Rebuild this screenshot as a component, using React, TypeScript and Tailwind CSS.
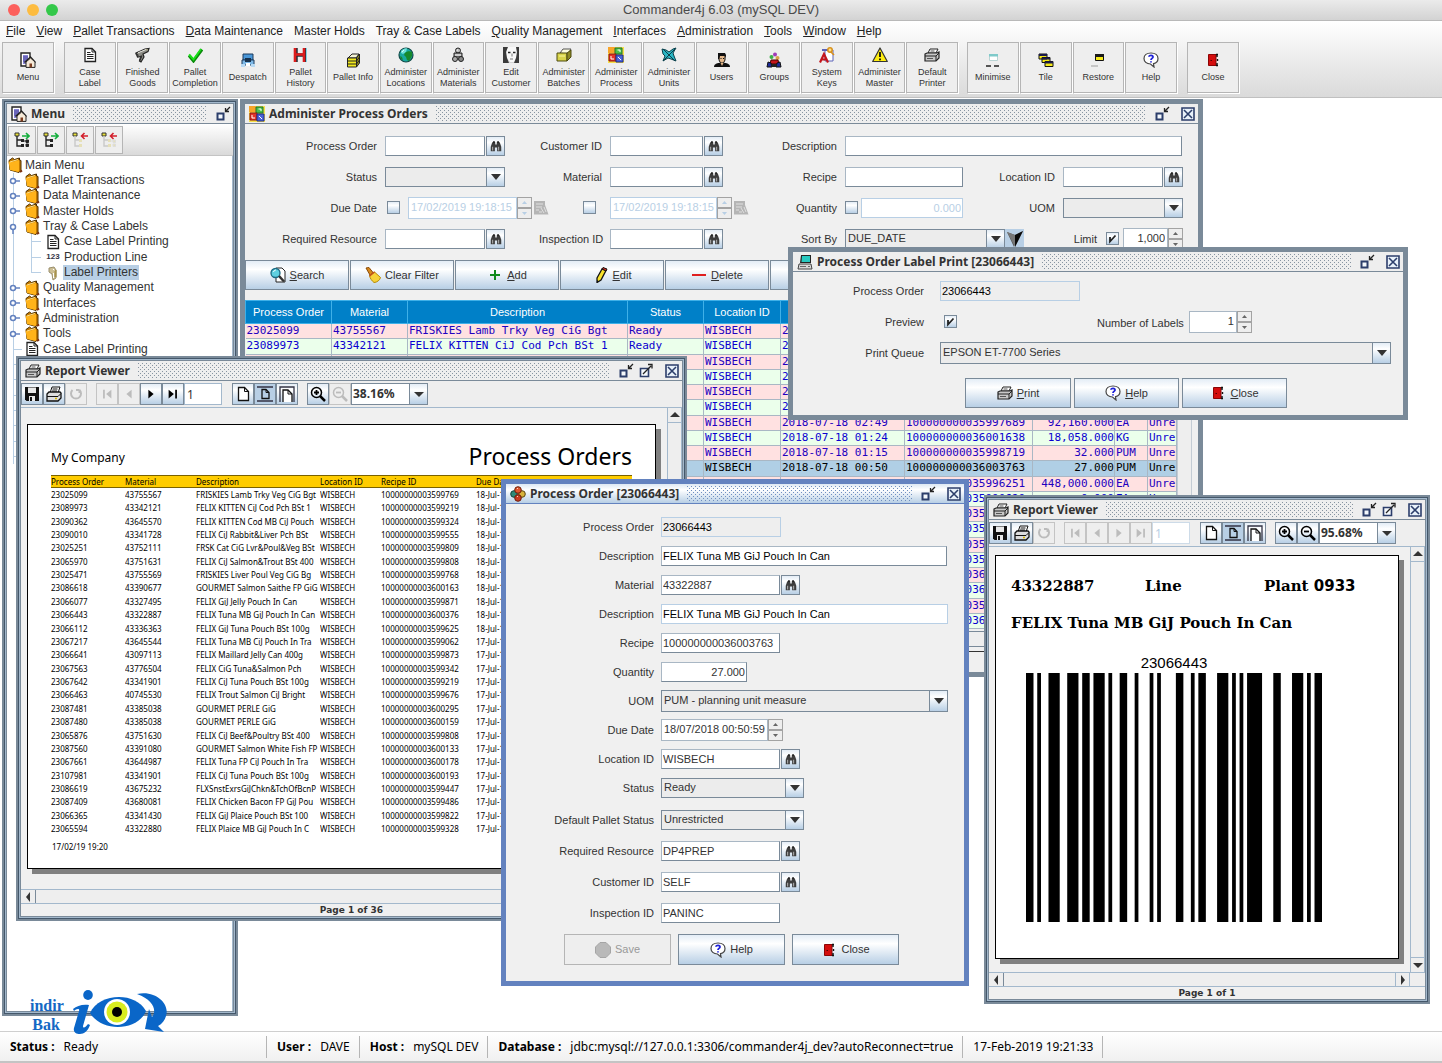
import type { ReactNode } from "react"
import clsx from "clsx"

/* ---------- data ---------- */

type Order = {
  id: string
  material: string
  description: string
  recipe: string
  due: string
  qty: string
  uom: string
}

const o = (
  id: string,
  material: string,
  description: string,
  recipe: string,
  due: string,
  qty = "0.000",
  uom = "EA"
): Order => ({ id, material, description, recipe, due, qty, uom })

const orders: Order[] = [
  o("23025099", "43755567", "FRISKIES Lamb Trky Veg CiG Bgt", "100000000035997690", "2018-07-18 05:30"),
  o("23089973", "43342121", "FELIX KITTEN CiJ Cod Pch BSt 1", "100000000035992190", "2018-07-18 05:12"),
  o("23090362", "43645570", "FELIX KITTEN Cod MB CiJ Pouch", "100000000035993240", "2018-07-18 04:50"),
  o("23090010", "43341728", "FELIX CiJ Rabbit&Liver Pch BSt", "100000000035995550", "2018-07-18 04:22"),
  o("23025251", "43752111", "FRSK Cat CiG Lvr&Poul&Veg BSt", "100000000035998090", "2018-07-18 03:41"),
  o("23065970", "43751631", "FELIX CiJ Salmon&Trout BSt 400", "100000000035998080", "2018-07-18 03:10"),
  o("23025471", "43755569", "FRISKIES Liver Poul Veg CiG Bg", "100000000035997689", "2018-07-18 02:49", "92,160.000"),
  o("23086618", "43390677", "GOURMET Salmon Saithe FP GiG", "100000000036001638", "2018-07-18 01:24", "18,058.000", "KG"),
  o("23066077", "43327495", "FELIX GiJ Jelly Pouch In Can", "100000000035998719", "2018-07-18 01:15", "32.000", "PUM"),
  o("23066443", "43322887", "FELIX Tuna MB GiJ Pouch In Can", "100000000036003763", "2018-07-18 00:50", "27.000", "PUM"),
  o("23066112", "43336363", "FELIX GiJ Tuna Pouch BSt 100g", "100000000035996251", "2018-07-18 00:20", "448,000.000"),
  o("23067217", "43645544", "FELIX Tuna MB CiJ Pouch In Tra", "100000000035990620", "2018-07-17 23:50"),
  o("23066641", "43097113", "FELIX Maillard Jelly Can 400g", "100000000035998730", "2018-07-17 23:31"),
  o("23067563", "43776504", "FELIX CiG Tuna&Salmon Pch", "100000000035993420", "2018-07-17 23:02"),
  o("23067642", "43341901", "FELIX CiJ Tuna Pouch BSt 100g", "100000000035992190", "2018-07-17 22:40"),
  o("23066463", "40745530", "FELIX Trout Salmon CiJ Bright", "100000000035996760", "2018-07-17 22:11"),
  o("23087481", "43385038", "GOURMET PERLE GiG", "100000000036002950", "2018-07-17 21:45"),
  o("23087480", "43385038", "GOURMET PERLE GiG", "100000000036001590", "2018-07-17 21:20"),
  o("23065876", "43751630", "FELIX CiJ Beef&Poultry BSt 400", "100000000035998080", "2018-07-17 20:50"),
  o("23087560", "43391080", "GOURMET Salmon White Fish FP", "100000000036001330", "2018-07-17 20:15"),
  o("23067661", "43644987", "FELIX Tuna FP CiJ Pouch In Tra", "100000000036001780", "2018-07-17 19:55"),
  o("23107981", "43341901", "FELIX CiJ Tuna Pouch BSt 100g", "100000000036001930", "2018-07-17 19:30"),
  o("23086619", "43675232", "FLXSnstExrsGiJChkn&TchOfBcnP", "100000000035994470", "2018-07-17 19:05"),
  o("23087409", "43680081", "FELIX Chicken Bacon FP GiJ Pou", "100000000035994860", "2018-07-17 18:40"),
  o("23066365", "43341430", "FELIX GiJ Plaice Pouch BSt 100", "100000000035998220", "2018-07-17 18:12"),
  o("23065594", "43322880", "FELIX Plaice MB GiJ Pouch In C", "100000000035993280", "2018-07-17 17:50"),
]

const selectedId = "23066443"

// start and width of each bar, in modules
const bars = [
  [0, 2], [3, 1], [6, 3], [11, 3], [15, 2], [18, 3], [22, 1], [25, 2], [29, 1], [33, 1], [35, 1],
  [40, 2], [44, 1], [46, 2], [51, 3], [55, 1], [57, 1], [59, 4], [66, 2], [71, 3], [75, 1], [77, 2],
]

/* ---------- icons ---------- */

function Svg({ size = 16, children, className }: { size?: number; children: ReactNode; className?: string }) {
  return (
    <svg width={size} height={size} viewBox="0 0 16 16" fill="none" className={clsx("shrink-0", className)} aria-hidden="true">
      {children}
    </svg>
  )
}

const MenuIcon = () => (
  <Svg>
    <path d="M1 1h9v13H1z" fill="#fff" stroke="#222" strokeWidth="1.4" />
    <path d="M3 3h5v9H3z" fill="#8a86d8" />
    <path d="M3 5h5M3 7h5M3 9h5" stroke="#4a469c" />
    <path d="M4.500 10.500 10.500 5l5 5.500" fill="#e8c9a8" stroke="#222" strokeWidth="1.3" />
    <path d="M6 10v5.400h9V10l-4.400-4z" fill="#f6ead8" stroke="#222" />
    <path d="M9.500 11.500h2.500v4H9.500z" fill="#7a3b1e" />
  </Svg>
)
const DocIcon = () => (
  <Svg>
    <path d="M3 1.500h7l3.500 3.500v9.500H3z" fill="#fff" stroke="#222" strokeWidth="1.3" />
    <path d="M10 1.500V5h3.500M5 5.500h3.500M5 7.500h6.500M5 9.500h6.500M5 11.500h6.500" stroke="#222" />
  </Svg>
)
const ScannerIcon = () => (
  <Svg>
    <path d="M2 6l9-4 4-.5-1 3-5 2.500 1 3-3 5-1.500-1 2-4.500-4 .5z" fill="#8d8d86" stroke="#222" strokeWidth="1.200" />
    <path d="M4 5.800l8-3.300" stroke="#e6e6e0" />
    <path d="M1.500 6.500l3 2M7.500 8.500l-2 5" stroke="#333" strokeWidth="1.400" />
    <path d="M11.500 2.500l2-.3v1.600z" fill="#d8cf9a" />
  </Svg>
)
const CheckIcon = () => (
  <Svg>
    <path d="M2 8.500 6.500 14 15 2.500" stroke="#0b8a0b" strokeWidth="3" />
    <path d="M2 7.500 6.500 12.500 14 2" stroke="#19e019" strokeWidth="2" />
  </Svg>
)
const TruckIcon = () => (
  <Svg>
    <path d="M3 2h10v6H3z" fill="#4a97d8" stroke="#1d3b5c" />
    <path d="M2 8h12v5H2z" fill="#7db9e8" stroke="#1d3b5c" />
    <path d="M5 6h6v4H5z" fill="#17324e" />
    <path d="M1 12h4v3H1zM11 12h4v3h-4z" fill="#b8daf4" />
    <path d="M6 11h4v3H6z" fill="#fff" />
  </Svg>
)
const HistoryIcon = () => (
  <Svg>
    <path d="M4 1v14M13 1v14M4 8h9" stroke="#24303a" strokeWidth="3.500" />
    <path d="M3 1v14M12 1v14M3 7.500h9" stroke="#dd1c1c" strokeWidth="2.600" />
    <path d="M14.500 1v14" stroke="#7fd6e6" />
  </Svg>
)
const PalletIcon = () => (
  <Svg>
    <path d="M3 6l4-4h7l-3 4z" fill="#f3f3d5" stroke="#222" />
    <path d="M2.500 6h9v9h-9z" fill="#f2ea1c" stroke="#222" />
    <path d="M11.500 6l3-4v9l-3 4z" fill="#9a9320" stroke="#222" />
    <path d="M2.500 9h9M2.500 12h9l3-4M11.500 9l3-4" stroke="#222" />
  </Svg>
)
const GlobeIcon = () => (
  <Svg>
    <circle cx="8" cy="8" r="7" fill="#19a9a0" stroke="#124a48" strokeWidth="1.200" />
    <path d="M3 4c2-2 4-3 6-2.500L8 5l-3 2-2-1z" fill="#6fe0d8" />
    <path d="M7 6c2-2 5-2 7-1v4l-3 5-2-1-1-3-2-2z" fill="#178a2c" />
    <path d="M2 9l2 1 1 3-2-1z" fill="#178a2c" />
    <path d="M4 5l2-2" stroke="#d7fff7" />
  </Svg>
)
const MaterialsIcon = () => (
  <Svg>
    <circle cx="8" cy="3.500" r="2.500" fill="#bbb" stroke="#222" />
    <path d="M4 6h8v4H4z" fill="#999" stroke="#222" />
    <circle cx="5" cy="12" r="2.500" fill="#aaa" stroke="#222" />
    <circle cx="11" cy="12" r="2.500" fill="#888" stroke="#222" />
    <path d="M5 8h6M7 3h1" stroke="#fff" />
  </Svg>
)
const FaceIcon = () => (
  <Svg>
    <path d="M0 0h16v16H0z" fill="#d4d4d4" />
    <path d="M4 0h9l1 9-3 6H7L3 10z" fill="#f8f8f8" />
    <path d="M0 0h5L3 5l1 6 2 5H0zM16 0h-3l1 5-1 6-2 5h5v-5z" fill="#3a3a3a" />
    <path d="M5 5.500h2.500M10 5.500h2.500" stroke="#222" strokeWidth="1.400" />
    <path d="M7 12h3M9 6.500v3" stroke="#777" />
  </Svg>
)
const BatchIcon = () => (
  <Svg>
    <path d="M4 6l3-4h8l-3 5z" fill="#fdfde0" stroke="#555" />
    <path d="M1 6h10v8H1z" fill="#d8d44a" stroke="#4c4a10" />
    <path d="M11 6l4-3v7l-4 4z" fill="#8d8a25" stroke="#4c4a10" />
    <path d="M3 9h6" stroke="#f7f59c" />
  </Svg>
)
const ProcessIcon = () => (
  <Svg>
    <path d="M0 0h16v16H0z" fill="#f6e04a" />
    <path d="M0 0h7v6H0z" fill="#f8a52a" />
    <path d="M7 1h7v6H7z" fill="#4ac14a" stroke="#23702a" />
    <path d="M1 7h7v7H1z" fill="#e4352a" stroke="#8d1410" />
    <path d="M8 8h7v7H8z" fill="#4a62d8" stroke="#1f2f88" />
    <path d="M3 9v3h3M9.500 3h2.500v2M10 10l3 3" stroke="#fff" />
  </Svg>
)
const UnitsIcon = () => (
  <Svg>
    <path d="M1 2l4 1 3 2 4-3 3-1-3 5 1 3 2 5-5-2-3-1-5 3 2-5-2-2z" fill="#29b6c4" stroke="#0b3f4a" />
    <path d="M2 2l12 12M14 2 2 14" stroke="#0b3f4a" />
  </Svg>
)
const UserIcon = () => (
  <Svg>
    <path d="M0 15c0-3 3-4 5-4h6c2 0 5 1 5 4z" fill="#111" />
    <path d="M5 3h6v5l-1.500 3h-3L5 8z" fill="#e5b98b" stroke="#111" />
    <path d="M4 1h7l1 2v3l-1-2H6L5 7H4z" fill="#111" />
    <path d="M6.500 11h3L8 14z" fill="#e5b98b" />
    <path d="M6.500 6.500h1M9 6.500h1" stroke="#111" />
  </Svg>
)
const GroupsIcon = () => (
  <Svg>
    <circle cx="9" cy="2.500" r="2" fill="#a03ab8" />
    <circle cx="5.500" cy="5" r="2" fill="#3fae49" />
    <circle cx="11.500" cy="6" r="2" fill="#d9a24a" />
    <path d="M5 8h7l1 4H4z" fill="#c4161c" stroke="#400" />
    <path d="M1 15l1-5 3 1 1 4zM10 15l1-4 3-1 1 5z" fill="#1c2a9c" stroke="#111" />
    <path d="M6 12h4v3H6z" fill="#222" />
  </Svg>
)
const KeysIcon = () => (
  <Svg>
    <path d="M6 3h8v11H6z" fill="#fff" stroke="#5b63b8" />
    <path d="M3 2h8v2H3z" fill="#5b63b8" />
    <path d="M1 15.500 5 7l4 8.500M3 12.500h5" stroke="#c4161c" strokeWidth="2.200" />
    <circle cx="11" cy="3" r="2.200" stroke="#d8901a" strokeWidth="1.500" fill="#ffe08a" />
    <path d="M12 5l3 3" stroke="#d8901a" strokeWidth="1.600" />
  </Svg>
)
const WarningIcon = () => (
  <Svg>
    <path d="M8 1 15.300 14.500H.7z" fill="#ffee11" stroke="#333" strokeWidth="1.200" strokeLinejoin="round" />
    <path d="M8 5v5M8 11.500v1.800" stroke="#111" strokeWidth="1.800" />
  </Svg>
)
const PrinterIcon = () => (
  <Svg>
    <path d="M4 6l2-4h8l-2 4z" fill="#fff" stroke="#222" />
    <path d="M1 7l2-1h10l2-1v6l-3 3H1z" fill="#c8c8c8" stroke="#222" strokeWidth="1.200" />
    <path d="M1 9h11l3-3M12 9v5" stroke="#222" />
    <path d="M3 11.500h6M6.500 4h4" stroke="#555" />
  </Svg>
)
const MinimiseIcon = () => (
  <Svg>
    <path d="M4.500 2.500h8v6h-8z" fill="#fff" stroke="#b9d4d4" />
    <path d="M4 2h9v2.500H4z" fill="#7fcaca" />
    <path d="M1 14h5M9 14h5" stroke="#222" strokeWidth="1.500" />
  </Svg>
)
const TileIcon = () => (
  <Svg>
    <path d="M1 2h8v5H1zM4 5.500h8v5H4zM7 9.500h8v5H7z" fill="#f6ea1a" stroke="#111" />
    <path d="M1 2h8v2H1zM4 5.500h8v2H4zM7 9.500h8v2H7z" fill="#1a1a4a" />
  </Svg>
)
const RestoreIcon = () => (
  <Svg>
    <path d="M5.500 2.500h8v6h-8z" fill="#f6ea1a" stroke="#111" />
    <path d="M5 2h9v3H5z" fill="#1a1a1a" />
    <path d="M1 14h7" stroke="#c6c6c6" strokeWidth="2" />
  </Svg>
)
const HelpIcon = () => (
  <Svg>
    <path d="M8 1c4.200 0 7 2.400 7 5.500 0 2.600-1.800 4.500-4.500 5.200L11 15l-3.500-3C3.500 12 1 9.600 1 6.500S3.800 1 8 1z" fill="#fff" stroke="#444" strokeWidth="1.200" />
    <path d="M6 4.800C6 3 10 3 10 5c0 1.400-2 1.400-2 3M8 9.200v1.300" stroke="#1f22d8" strokeWidth="1.800" />
  </Svg>
)
const DoorIcon = () => (
  <Svg>
    <path d="M3.500 2.500h7.500v11H3.500z" fill="#d40d0d" stroke="#8b0505" />
    <path d="M12 2v3M12.500 7v2M12 11v3M11 2.500h2M11 13.500h2" stroke="#111" strokeWidth="1.400" />
    <path d="M5.500 8.500h1.500" stroke="#500" />
  </Svg>
)
const FolderIcon = () => (
  <Svg>
    <path d="M2 3.500l3.500-2.500 2 1.500L12.500 1v2l1.500.5v10L12 15.500 3 13z" fill="#c47a00" stroke="#4d2f00" />
    <path d="M1.500 4.500 5 5l7-2v11.500l-1 .5-8-2z" fill="#ffb31a" />
    <path d="M3 5l8-2.500" stroke="#ffe08a" />
    <path d="M13 15l2-1.500" stroke="#7a2f10" strokeWidth="2" />
  </Svg>
)
const NumbersIcon = () => (
  <span className="w-4 shrink-0 text-center text-[8px] leading-4 font-bold text-[#334]">123</span>
)
const PrintersIcon = () => (
  <Svg>
    <path d="M4 3l5-1 2 3v8l-3 2-1-6-3-2z" fill="#cdbf95" stroke="#9a8f6c" />
    <path d="M8 4l2 2M8.500 8v5" stroke="#fff" />
    <path d="M9.500 5h2v7h-2z" fill="#a8924d" />
  </Svg>
)
const BinocularsIcon = () => (
  <Svg size={12}>
    <path d="M3 3h4v3h2V3h4l2 6v6H9.500v-5h-3v5H1V9z" fill="#3d3d3d" />
    <path d="M4 1.500h2.500V4H4zM9.500 1.500H12V4H9.500z" fill="#222" />
    <path d="M3.500 9v5M11.500 9v5" stroke="#a8a8a8" strokeWidth="1.500" />
  </Svg>
)
const SearchIcon = () => (
  <Svg>
    <path d="M6 1h6l3 3v11H6z" fill="#fff" stroke="#222" />
    <circle cx="5.500" cy="6" r="4.500" fill="#5fd0e0" stroke="#1b6a84" strokeWidth="1.300" />
    <path d="M9 9l5 5.500" stroke="#333" strokeWidth="2.500" />
    <path d="M3.500 5c.5-1.500 1.500-2 2.500-2" stroke="#fff" />
  </Svg>
)
const BroomIcon = () => (
  <Svg>
    <path d="M1 1l3-.5 4 5-3 2.500z" fill="#d88a1c" stroke="#8a4a06" />
    <path d="M4.500 8.500l5-3.500 6 5.500c-.5 2.500-3.500 5-6.500 5-2-1.500-4-4-4.500-7z" fill="#f7d338" stroke="#b58a0a" />
    <path d="M4.500 9l5-4" stroke="#c4501a" strokeWidth="1.600" />
  </Svg>
)
const PlusIcon = () => (
  <Svg>
    <path d="M8 3v10M3 8h10" stroke="#0f8a1c" strokeWidth="2" />
  </Svg>
)
const PencilIcon = () => (
  <Svg>
    <path d="M4 11 9 2l4 1.500L8 13l-4 2.500z" fill="#f7e12a" stroke="#111" strokeWidth="1.300" />
    <path d="M9 2l1-1.500 4 1.500-1 2z" fill="#d4281c" stroke="#111" />
    <path d="M4 13v2.500l2-1z" fill="#111" />
  </Svg>
)
const MinusIcon = () => (
  <Svg>
    <path d="M1 8h14" stroke="#df2020" strokeWidth="2" />
  </Svg>
)
const CalendarIcon = () => (
  <Svg>
    <path d="M1 1h11v4l3.500 9.500H1z" fill="#b5b5b5" />
    <path d="M3 4h7M3 7h6M3 10h3M8 8l3 5M11 7l2 5M6 12h3" stroke="#e0e0e0" />
  </Svg>
)
const MoleculeIcon = () => (
  <Svg>
    <circle cx="4" cy="8" r="3.300" fill="#2f8a78" stroke="#16443c" />
    <circle cx="12" cy="8" r="3.300" fill="#d8b23a" stroke="#5a4510" />
    <circle cx="8" cy="4" r="3.300" fill="#e2562c" stroke="#6a1f0c" />
    <circle cx="8" cy="12" r="3.300" fill="#c93c22" stroke="#6a1f0c" />
    <path d="M7 3l1-1M7 11l1-1" stroke="#ffd5c0" />
  </Svg>
)
const ComputerIcon = () => (
  <Svg>
    <path d="M4 1h10v8H3z" fill="#222" />
    <path d="M5 2h8v6H4.500z" fill="#27c9c0" />
    <path d="M2 10h12l1 5H1z" fill="#d8d8d8" stroke="#444" />
    <path d="M3 12.500h6M11 12.500h2" stroke="#666" />
  </Svg>
)
const SaveIcon = () => (
  <Svg>
    <path d="M1 1h14v14H2.500L1 13.500z" fill="#111" />
    <path d="M4 1.500h8V7H4zM5 10h6v5H5z" fill="#e9e9e9" />
    <path d="M6 11h2v4H6z" fill="#111" />
  </Svg>
)
const ReportPrintIcon = () => (
  <Svg>
    <path d="M4 7l2-6h8l-2 6z" fill="#fff" stroke="#111" />
    <path d="M1 8l2-2h11l1 1v5l-3 3H1z" fill="#ddd" stroke="#111" strokeWidth="1.300" />
    <path d="M1 10.500h11l3-3M6.500 3h5M6 5h5" stroke="#111" />
    <path d="M9 12.500h2" stroke="#d8b800" strokeWidth="1.500" />
  </Svg>
)
const ReloadIcon = () => (
  <Svg>
    <path d="M4.500 4A5 5 0 1 0 11.500 4M11.500 4H8M11.500 4v3" stroke="#bcbcbc" strokeWidth="2" />
  </Svg>
)
const NavIcon = ({ dir, bar }: { dir: "left" | "right"; bar?: boolean }) => (
  <Svg size={14} className={dir === "left" ? "-scale-x-100" : ""}>
    <path d={bar ? "M3 3l6 5-6 5z" : "M5 3l6 5-6 5z"} fill="currentColor" />
    {bar && <path d="M11.500 3v10" stroke="currentColor" strokeWidth="2" />}
  </Svg>
)
const PageIcon = () => (
  <Svg>
    <path d="M3.500 1.500h6l4 4v9h-10z" fill="#fff" stroke="#111" strokeWidth="1.300" />
    <path d="M9.500 1.500v4h4" stroke="#111" />
  </Svg>
)
const FitPageIcon = () => (
  <Svg>
    <path d="M0 1h16M0 15h16" stroke="#334" strokeWidth="1.300" />
    <path d="M5 3.500h4l3 3v6H5z" stroke="#111" strokeWidth="1.300" />
    <path d="M9 3.500v3h3" stroke="#111" />
  </Svg>
)
const FitWidthIcon = () => (
  <Svg>
    <path d="M1 16V1h14v15" stroke="#334" strokeWidth="1.300" />
    <path d="M4 16V4h5l4 4v8" fill="#fff" stroke="#111" strokeWidth="1.300" />
    <path d="M9 4v4h4" stroke="#111" />
  </Svg>
)
const ZoomIcon = ({ plus }: { plus?: boolean }) => (
  <Svg>
    <circle cx="6.500" cy="6.500" r="5" fill="none" stroke="currentColor" strokeWidth="1.500" />
    <path d="M10 10l5 5" stroke="currentColor" strokeWidth="2.500" />
    <path d={plus ? "M4 6.500h5M6.500 4v5" : "M4 6.500h5"} stroke="currentColor" strokeWidth="1.800" />
  </Svg>
)
const StopIcon = () => (
  <Svg>
    <path d="M5 .5h6L15.500 5v6L11 15.500H5L.5 11V5z" fill="#b9b9b9" stroke="#a5a5a5" />
  </Svg>
)
const TreeIcon = ({ full, collapse }: { full?: boolean; collapse?: boolean }) => (
  <Svg>
    <path d="M1 1h4v3H1z" fill="#e8e03a" stroke="#333" />
    <path d="M3 4v10h4M3 8h4" stroke={collapse ? "#c9c9c9" : "#222"} strokeWidth="1.400" />
    <path d="M7 7h3v3H7zM7 12h3v3H7z" fill={collapse ? "#e6e0b8" : "#222"} />
    {full && <path d="M12 8h2.500v2.500H12zM12 12h2.500v2.500H12zM9 9h3" fill={collapse ? "#e6e0b8" : "#222"} stroke={collapse ? "#ddd" : "#222"} />}
    {collapse ? (
      <path d="M16 4h-6M12.500 1 9.500 4l3 3" stroke="#d3202c" strokeWidth="1.600" />
    ) : (
      <path d="M8 4h6M12 1l3 3-3 3" stroke="#14ae3c" strokeWidth="1.600" />
    )}
  </Svg>
)
const SortIcon = () => (
  <Svg>
    <path d="M0 1l8 3-1 12z" fill="#555" />
    <path d="M0 1l8 3 8-4-8 16z" fill="#777" />
    <path d="M8 4l8-4-8 16z" fill="#0a0a0a" />
  </Svg>
)
const HandleIcon = ({ open }: { open?: boolean }) => (
  <svg width="12" height="14" viewBox="0 0 12 14" fill="none" className="shrink-0" aria-hidden="true">
    <circle cx="4" cy="7" r="2.500" fill="#fff" stroke="#6382bf" strokeWidth="1.500" />
    <path d={open ? "M4 9.500V14" : "M6.500 7H11"} stroke="#6382bf" strokeWidth="1.500" />
  </svg>
)

const frameStroke = "#2c3e6b"
const ToIconIcon = () => (
  <Svg>
    <path d="M2.500 7.500h6v6h-6z" fill="#f4f8fc" stroke={frameStroke} strokeWidth="2" />
    <path d="M15 1l-4 4M10.500 2v3.500H14" stroke="#222" strokeWidth="1.300" />
  </Svg>
)
const EnlargeIcon = () => (
  <Svg>
    <path d="M2.500 5.500h8v8h-8z" fill="#f4f8fc" stroke={frameStroke} strokeWidth="1.600" />
    <path d="M5 11l8-8M10 1.500h4V5.500" stroke="#222" strokeWidth="1.300" />
  </Svg>
)
const CloseFrameIcon = () => (
  <Svg>
    <path d="M2 2h12v12H2z" fill="#e8f1fa" stroke={frameStroke} strokeWidth="1.600" />
    <path d="M4 4l8 8M12 4l-8 8" stroke={frameStroke} strokeWidth="1.600" />
  </Svg>
)

/* ---------- controls ---------- */

const metal = "bg-linear-to-b from-[#e4edf6] via-white via-30% to-[#b8cfe5]"
const gray = "border-[#c4c4c4] bg-[#eeeeee]"

function Label({ id, children }: { id: string; children: ReactNode }) {
  return (
    <label htmlFor={id} className="text-right text-[11px] leading-4 whitespace-nowrap text-[#333]">
      {children}
    </label>
  )
}

type FieldProps = {
  id: string
  value?: string
  width: string
  off?: boolean
  flat?: boolean
  right?: boolean
  gray?: boolean
  black?: boolean
}

function Field({ id, value = "", width, off, flat, right, gray, black }: FieldProps) {
  return (
    <input
      id={id}
      type="text"
      defaultValue={value}
      disabled={off}
      readOnly={flat}
      className={clsx(
        "h-5 border px-px text-[11px] leading-4 outline-none",
        width,
        right && "text-right",
        gray ? "bg-[#eeeeee]" : "bg-white",
        off || flat ? "border-[#b8cfe5]" : "border-[#7a8a99] border-t-[#a9b7c4] border-l-[#a9b7c4]",
        off ? "text-[#b8cfe5]" : flat || black ? "text-black" : "text-[#333]"
      )}
    />
  )
}

function Lookup({ label }: { label: string }) {
  return (
    <button type="button" aria-label={`Look up ${label}`} className={clsx("ml-px flex h-5 w-[19px] items-center justify-center border border-[#7a8a99]", metal)}>
      <BinocularsIcon />
    </button>
  )
}

function Combo({ id, value = "", width, tall }: { id: string; value?: string; width: string; tall?: boolean }) {
  return (
    <span className={clsx("flex border border-[#7a8a99] bg-[#ececec]", tall ? "h-[22px]" : "h-5", width)}>
      <select id={id} defaultValue={value} className="min-w-0 flex-1 appearance-none px-0.5 text-[11px] text-[#333] outline-none">
        <option>{value}</option>
      </select>
      <span className={clsx("pointer-events-none flex w-[18px] items-center justify-center border-l border-[#7a8a99]", metal)}>
        <svg width="10" height="6" viewBox="0 0 10 6" aria-hidden="true">
          <path d="M0 0h10L5 6z" fill="#333" />
        </svg>
      </span>
    </span>
  )
}

function Spinner({ id, value, width, off, right }: { id: string; value: string; width: string; off?: boolean; right?: boolean }) {
  return (
    <span className={clsx("flex h-[22px] shrink-0", width)}>
      <input
        id={id}
        type="text"
        defaultValue={value}
        disabled={off}
        className={clsx(
          "min-w-0 flex-1 border bg-white px-0.5 text-[11px] outline-none",
          right && "text-right",
          off ? "border-[#b8cfe5] text-[#b8cfe5]" : "border-[#a9b7c4] text-[#333]"
        )}
      />
      <span className="flex w-[15px] flex-col">
        {["Increase", "Decrease"].map((name, i) => (
          <button
            key={name}
            type="button"
            aria-label={`${name} ${id}`}
            disabled={off}
            className={clsx("flex flex-1 items-center justify-center border border-[#a3a3a3] bg-[#eeeeee]", off ? "text-[#b8cfe5]" : "text-[#666]")}
          >
            <svg width="5" height="3" viewBox="0 0 5 3" aria-hidden="true">
              <path d={i === 0 ? "M0 3h5L2.500 0z" : "M0 0h5L2.500 3z"} fill="currentColor" />
            </svg>
          </button>
        ))}
      </span>
    </span>
  )
}

function Tick({ id, checked, label }: { id: string; checked?: boolean; label?: string }) {
  return (
    <span className="grid shrink-0">
      <input
        id={id}
        type="checkbox"
        defaultChecked={checked}
        aria-label={label}
        className={clsx("peer col-start-1 row-start-1 size-[13px] appearance-none border border-[#7a8a99]", metal)}
      />
      <svg width="13" height="13" viewBox="0 0 13 13" fill="none" className="pointer-events-none invisible col-start-1 row-start-1 peer-checked:visible" aria-hidden="true">
        <path d="M4 5v4.500L9.500 3.500" stroke="#222" strokeWidth="1.800" />
      </svg>
    </span>
  )
}

function PushButton({ icon, children, className, disabled, label }: { icon: ReactNode; children?: ReactNode; className: string; disabled?: boolean; label?: string }) {
  return (
    <button
      type="button"
      disabled={disabled}
      aria-label={label}
      className={clsx(
        "flex items-center justify-center gap-1 border text-[11px] whitespace-nowrap",
        disabled ? "border-[#b5b5b5] bg-[#eeeeee] text-[#999]" : clsx("border-[#7a8a99] text-[#333]", metal),
        className
      )}
    >
      {icon}
      <span>{children}</span>
    </button>
  )
}

/* ---------- internal frame ---------- */

type FrameProps = {
  title: string
  icon: ReactNode
  className: string
  active?: boolean
  resizable?: boolean
  enlarge?: boolean
  closable?: boolean
  children: ReactNode
}

function Frame({ title, icon, className, active, resizable, enlarge, closable = true, children }: FrameProps) {
  return (
    <section
      aria-label={title}
      className={clsx(
        "absolute flex flex-col bg-[#f0f0f0]",
        active && "border-5 border-[#6382bf]",
        !active && !resizable && "border-5 border-[#7a8a99]",
        resizable && "border-2 border-[#7a8a99] p-[3px] shadow-[inset_0_0_0_1px_#44576a,inset_0_0_0_2px_#a3b8cc,inset_0_0_0_3px_#7a8a99]",
        className
      )}
    >
      <header
        className={clsx(
          "flex h-5 shrink-0 items-center gap-1 border-b pr-0.5 pl-1",
          active ? "border-[#6382bf] bg-linear-to-b from-[#dde8f3] via-white via-30% to-[#b8cfe5]" : "border-[#7a8a99] bg-[#eeeeee]"
        )}
      >
        {icon}
        <h2 className="font-['Noto_Sans',sans-serif] text-xs leading-4 font-bold whitespace-nowrap text-[#333]">{title}</h2>
        <div
          className={clsx(
            "mx-1 h-4 flex-1 bg-size-[4px_4px] bg-position-[0_0,2px_2px]",
            active
              ? "bg-[conic-gradient(at_1px_1px,transparent_270deg,#6f8fc0_0),conic-gradient(at_1px_1px,transparent_270deg,#6f8fc0_0)]"
              : "bg-[conic-gradient(at_1px_1px,transparent_270deg,#8794a1_0),conic-gradient(at_1px_1px,transparent_270deg,#8794a1_0)]"
          )}
        />
        <button type="button" aria-label={`Minimise ${title}`}>
          <ToIconIcon />
        </button>
        {enlarge && (
          <button type="button" aria-label={`Maximise ${title}`}>
            <EnlargeIcon />
          </button>
        )}
        {closable && (
          <button type="button" aria-label={`Close ${title}`} className="ml-1.5">
            <CloseFrameIcon />
          </button>
        )}
      </header>
      {children}
    </section>
  )
}

/* ---------- application chrome ---------- */

function TitleBar() {
  return (
    <div className="flex h-[21px] items-center border-b border-[#b9b9b9] bg-linear-to-b from-[#ebebeb] to-[#d3d3d3] px-2">
      <div className="flex flex-1 gap-[7px]">
        <span className="size-3 rounded-full bg-[#fc605c]" />
        <span className="size-3 rounded-full bg-[#fdbc40]" />
        <span className="size-3 rounded-full bg-[#34c84a]" />
      </div>
      <h1 className="text-[13px] leading-5 text-[#4a4a4a]">Commander4j 6.03 (mySQL DEV)</h1>
      <div className="flex-1" />
    </div>
  )
}

const menus = [
  ["F", "ile"],
  ["V", "iew"],
  ["P", "allet Transactions"],
  ["D", "ata Maintenance"],
  ["", "Master Holds"],
  ["", "Tray & Case Labels"],
  ["Q", "uality Management"],
  ["I", "nterfaces"],
  ["A", "dministration"],
  ["T", "ools"],
  ["W", "indow"],
  ["H", "elp"],
]

const tools: [string[], ReactNode][] = [
  [["Case", "Label"], <DocIcon />],
  [["Finished", "Goods"], <ScannerIcon />],
  [["Pallet", "Completion"], <CheckIcon />],
  [["Despatch"], <TruckIcon />],
  [["Pallet", "History"], <HistoryIcon />],
  [["Pallet Info"], <PalletIcon />],
  [["Administer", "Locations"], <GlobeIcon />],
  [["Administer", "Materials"], <MaterialsIcon />],
  [["Edit", "Customer"], <FaceIcon />],
  [["Administer", "Batches"], <BatchIcon />],
  [["Administer", "Process"], <ProcessIcon />],
  [["Administer", "Units"], <UnitsIcon />],
  [["Users"], <UserIcon />],
  [["Groups"], <GroupsIcon />],
  [["System", "Keys"], <KeysIcon />],
  [["Administer", "Master"], <WarningIcon />],
  [["Default", "Printer"], <PrinterIcon />],
]

const windowTools: [string[], ReactNode][] = [
  [["Minimise"], <MinimiseIcon />],
  [["Tile"], <TileIcon />],
  [["Restore"], <RestoreIcon />],
  [["Help"], <HelpIcon />],
]

function ToolButton({ lines, icon }: { lines: string[]; icon: ReactNode }) {
  return (
    <button
      type="button"
      className="flex h-[51px] min-w-0 flex-col items-center justify-center gap-1 border border-[#b5b5b5] bg-[#eeeeee] shadow-[1px_1px_0_#fff]"
    >
      {icon}
      <span className="text-[9px] leading-[11px] whitespace-nowrap text-[#333]">
        {lines.map((line) => (
          <span key={line} className="block">
            {line}
          </span>
        ))}
      </span>
    </button>
  )
}

function MenuAndTools() {
  return (
    <div className="border-b border-[#c0c0c0] bg-linear-to-b from-white to-[#dadada]">
      <nav className="flex h-5 items-center gap-[11px] px-1.5 text-xs leading-[18px] text-[#222]">
        {menus.map(([key, rest]) => (
          <button key={rest} type="button" className="whitespace-nowrap">
            {key && <span className="underline">{key}</span>}
            {rest}
          </button>
        ))}
      </nav>
      <div className="flex pt-px pb-1 pl-0.5">
        <div className="grid w-[52px]">
          <ToolButton lines={["Menu"]} icon={<MenuIcon />} />
        </div>
        <div className="ml-2.5 grid w-[894px] grid-cols-17 gap-px">
          {tools.map(([lines, icon]) => (
            <ToolButton key={lines.join()} lines={lines} icon={icon} />
          ))}
        </div>
        <div className="ml-[9px] grid w-[210px] grid-cols-4 gap-px">
          {windowTools.map(([lines, icon]) => (
            <ToolButton key={lines.join()} lines={lines} icon={icon} />
          ))}
        </div>
        <div className="ml-2.5 grid w-[52px]">
          <ToolButton lines={["Close"]} icon={<DoorIcon />} />
        </div>
      </div>
    </div>
  )
}

function StatusItem({ name, value, className }: { name?: string; value: string; className?: string }) {
  return (
    <div className={clsx("flex h-[22px] items-center gap-[9px] border-r border-[#b5b5b5] pr-[9px] pl-2.5 whitespace-nowrap", className)}>
      {name && <span className="font-bold">{name} :</span>}
      <span>{value}</span>
    </div>
  )
}

function StatusBar() {
  return (
    <footer className="flex h-8 items-center border-t border-b-2 border-t-[#cfcfcf] border-b-[#c4c4c4] bg-linear-to-b from-white to-[#f0f0f0] font-['Noto_Sans',sans-serif] text-xs text-black">
      <StatusItem name="Status" value="Ready" className="w-[267px]" />
      <StatusItem name="User" value="DAVE" />
      <StatusItem name="Host" value="mySQL DEV" />
      <StatusItem name="Database" value="jdbc:mysql://127.0.0.1:3306/commander4j_dev?autoReconnect=true" />
      <StatusItem value="17-Feb-2019 19:21:33" />
    </footer>
  )
}

/* ---------- menu tree ---------- */

type TreeNode = { label: string; icon: ReactNode; level: number; open?: boolean; leaf?: boolean; last?: boolean; selected?: boolean }

const tree: TreeNode[] = [
  { label: "Pallet Transactions", icon: <FolderIcon />, level: 1 },
  { label: "Data Maintenance", icon: <FolderIcon />, level: 1 },
  { label: "Master Holds", icon: <FolderIcon />, level: 1 },
  { label: "Tray & Case Labels", icon: <FolderIcon />, level: 1, open: true },
  { label: "Case Label Printing", icon: <DocIcon />, level: 2 },
  { label: "Production Line", icon: <NumbersIcon />, level: 2 },
  { label: "Label Printers", icon: <PrintersIcon />, level: 2, last: true, selected: true },
  { label: "Quality Management", icon: <FolderIcon />, level: 1 },
  { label: "Interfaces", icon: <FolderIcon />, level: 1 },
  { label: "Administration", icon: <FolderIcon />, level: 1 },
  { label: "Tools", icon: <FolderIcon />, level: 1 },
  { label: "Case Label Printing", icon: <DocIcon />, level: 1, leaf: true },
]

function MenuWindow() {
  return (
    <Frame title="Menu" icon={<MenuIcon />} resizable closable={false} className="top-px left-0.5 h-[917px] w-[236px]">
      <div className="flex h-8 items-center gap-px border-b border-[#c4c4c4] bg-linear-to-b from-white to-[#dadada] px-px">
        {["Expand all", "Expand", "Collapse all", "Collapse"].map((name, i) => (
          <button key={name} type="button" aria-label={name} className="flex size-7 items-center justify-center border border-[#b5b5b5] bg-[#eeeeee]">
            <TreeIcon full={i === 0 || i === 3} collapse={i > 1} />
          </button>
        ))}
      </div>
      <ul className="grid min-h-0 flex-1 content-start border-r border-[#a3b8cc] bg-white text-xs text-[#333]">
        <li className="pt-px">
          <span className="flex h-4 items-center gap-0.5">
            <FolderIcon />
            Main Menu
          </span>
          <ul className="ml-[6px] grid h-[291px] grid-rows-19 border-l border-[#b8cfe5]">
            {tree.map((node, i) => (
              <li key={i} className={clsx("flex items-center gap-0.5", node.level === 2 && "pl-[17px]")}>
                {node.level === 1 && !node.leaf && (
                  <span className="-ml-[5px] flex">
                    <HandleIcon open={node.open} />
                  </span>
                )}
                {node.leaf && <span className="h-px w-2 bg-[#b8cfe5]" />}
                {node.level === 2 && (
                  <span className="mr-0.5 flex h-full w-2.5 flex-col">
                    <span className="flex-1 border-b border-l border-[#b8cfe5]" />
                    <span className={clsx("flex-1 border-[#b8cfe5]", !node.last && "border-l")} />
                  </span>
                )}
                <span className={clsx("flex shrink-0", node.level === 1 && !node.leaf && "ml-px")}>{node.icon}</span>
                <span className={clsx("px-px leading-[15px] whitespace-nowrap", node.selected && "bg-[#b8cfe5]")}>{node.label}</span>
              </li>
            ))}
            {Array.from({ length: 7 }, (_, i) => (
              <li key={`t${i}`} className="flex items-center">
                <span className="h-px w-2 bg-[#b8cfe5]" />
              </li>
            ))}
          </ul>
        </li>
      </ul>
    </Frame>
  )
}

/* ---------- administer process orders ---------- */

const columns: [string, string][] = [
  ["Process Order", "w-[86px]"],
  ["Material", "w-[76px]"],
  ["Description", "w-[220px]"],
  ["Status", "w-[76px]"],
  ["Location ID", "w-[77px]"],
  ["Due Date", "w-[124px]"],
  ["Recipe ID", "w-[128px]"],
  ["Quantity", "w-[82px]"],
  ["UOM", "w-[33px]"],
  ["", "w-[29px]"],
]

function OrdersWindow() {
  return (
    <Frame title="Administer Process Orders" icon={<ProcessIcon />} className="top-px left-60 h-[578px] w-[963px]">
      <form className="grid auto-rows-[31px] grid-cols-[132px_146px_63px_146px_73px_118px_84px_120px] items-center gap-x-2 pt-1.5">
        <Label id="f-order">Process Order</Label>
        <div className="flex">
          <Field id="f-order" width="w-[100px]" />
          <Lookup label="process order" />
        </div>
        <Label id="f-customer">Customer ID</Label>
        <div className="flex">
          <Field id="f-customer" width="w-[93px]" />
          <Lookup label="customer" />
        </div>
        <Label id="f-desc">Description</Label>
        <div className="col-span-3 flex">
          <Field id="f-desc" width="w-[337px]" />
        </div>

        <Label id="f-status">Status</Label>
        <Combo id="f-status" width="w-[120px]" />
        <Label id="f-material">Material</Label>
        <div className="flex">
          <Field id="f-material" width="w-[93px]" />
          <Lookup label="material" />
        </div>
        <Label id="f-recipe">Recipe</Label>
        <Field id="f-recipe" width="w-[118px]" />
        <Label id="f-location">Location ID</Label>
        <div className="flex">
          <Field id="f-location" width="w-[100px]" />
          <Lookup label="location" />
        </div>

        <Label id="f-due-from">Due Date</Label>
        <div className="flex items-center gap-2 pl-0.5">
          <Tick id="f-due-from-on" label="Filter from date" />
          <span className="flex items-center gap-px">
            <Spinner id="f-due-from" value="17/02/2019 19:18:15" width="w-[124px]" off />
            <CalendarIcon />
          </span>
        </div>
        <div className="flex justify-end pr-1.5">
          <Tick id="f-due-to-on" label="Filter to date" />
        </div>
        <div className="flex items-center gap-px">
          <Spinner id="f-due-to" value="17/02/2019 19:18:15" width="w-[122px]" off />
          <CalendarIcon />
        </div>
        <Label id="f-qty">Quantity</Label>
        <div className="flex items-center gap-[3px]">
          <Tick id="f-qty-on" label="Filter quantity" />
          <Field id="f-qty" value="0.000" width="w-[102px]" off right />
        </div>
        <Label id="f-uom">UOM</Label>
        <Combo id="f-uom" width="w-[120px]" />

        <Label id="f-resource">Required Resource</Label>
        <div className="flex">
          <Field id="f-resource" width="w-[100px]" />
          <Lookup label="required resource" />
        </div>
        <Label id="f-inspection">Inspection ID</Label>
        <div className="flex">
          <Field id="f-inspection" width="w-[93px]" />
          <Lookup label="inspection" />
        </div>
        <Label id="f-sort">Sort By</Label>
        <div className="col-span-3 flex items-center">
          <Combo id="f-sort" value="DUE_DATE" width="w-[160px]" />
          <button type="button" aria-label="Sort direction" className="flex h-5 w-[19px] items-center justify-center bg-[#b8cfe5]">
            <SortIcon />
          </button>
          <span className="ml-auto flex items-center gap-[9px]">
            <Label id="f-limit">Limit</Label>
            <span className="flex items-center gap-1">
              <Tick id="f-limit-on" checked label="Limit rows" />
              <Spinner id="f-limit" value="1,000" width="w-[60px]" right />
            </span>
          </span>
        </div>
      </form>

      <div className="mt-1.5 flex gap-px">
        <PushButton icon={<SearchIcon />} className="h-[30px] w-[104px]">
          <u>S</u>earch
        </PushButton>
        <PushButton icon={<BroomIcon />} className="h-[30px] w-[104px]">
          Clear Filter
        </PushButton>
        <PushButton icon={<PlusIcon />} className="h-[30px] w-[104px]">
          <u>A</u>dd
        </PushButton>
        <PushButton icon={<PencilIcon />} className="h-[30px] w-[104px]">
          <u>E</u>dit
        </PushButton>
        <PushButton icon={<MinusIcon />} className="h-[30px] w-[104px]">
          <u>D</u>elete
        </PushButton>
        <PushButton icon={<PrinterIcon />} label="Print" className="h-[30px] w-[104px]" />
      </div>

      <div className="mt-2.5 flex">
        <table className="h-[329px] w-[931px] table-fixed border-collapse font-['DejaVu_Sans_Mono','Liberation_Mono',monospace] text-[11px] leading-[14px]">
          <thead>
            <tr className="h-[23px] bg-[#0080c8] font-['Liberation_Sans',Arial,sans-serif] text-white">
              {columns.map(([name, width]) => (
                <th key={name} className={clsx("border border-[#3fb0e8] p-0 font-normal", width)}>
                  {name}
                </th>
              ))}
            </tr>
          </thead>
          <tbody>
            {orders.slice(0, 20).map((order, i) => (
              <tr
                key={order.id}
                className={clsx(
                  "whitespace-nowrap *:overflow-hidden *:border-r *:border-b *:border-[#a9b7c4] *:p-0 *:pl-px",
                  order.id === selectedId ? "bg-[#b0cfe5] text-black" : i % 2 === 0 ? "bg-[#ffe1e1] text-[#2200c0]" : "bg-[#ebffeb] text-[#0a00d0]"
                )}
              >
                <td>{order.id}</td>
                <td>{order.material}</td>
                <td>{order.description}</td>
                <td>Ready</td>
                <td>WISBECH</td>
                <td>{order.due}</td>
                <td>{order.recipe}</td>
                <td className="text-right">{order.qty}</td>
                <td>{order.uom}</td>
                <td>Unre</td>
              </tr>
            ))}
          </tbody>
        </table>
        <div className="w-[15px] border-x border-[#c4ccd4] bg-[#eeeeee]" />
      </div>
      <div className="mt-0.5 h-4 border border-[#7a8a99] bg-[#eeeeee]" />
      <div className="mt-1 flex-1 border-t border-[#333]" />
    </Frame>
  )
}

/* ---------- report viewer ---------- */

function RvButton({ label, off, on, children }: { label: string; off?: boolean; on?: boolean; children: ReactNode }) {
  return (
    <button
      type="button"
      aria-label={label}
      disabled={off}
      className={clsx(
        "flex size-[22px] items-center justify-center border",
        off ? clsx(gray, "text-[#bcbcbc]") : on ? "border-[#7a8a99] bg-[#b8cfe5] text-black" : clsx("border-[#7a8a99] text-black", metal)
      )}
    >
      {children}
    </button>
  )
}

type ViewerProps = {
  id: string
  className: string
  zoom: string
  single?: boolean
  zoomOutOff?: boolean
  footer: string
  pageClass: string
  children: ReactNode
}

const Arrow = ({ d }: { d: string }) => (
  <svg width="10" height="10" viewBox="0 0 10 10" aria-hidden="true">
    <path d={d} fill="#333" />
  </svg>
)
const up = "M0 7h10L5 2z"
const down = "M0 3h10L5 8z"
const left = "M7 0v10L3 5z"
const right = "M3 0v10l4-5z"

function ReportViewer({ id, className, zoom, single, zoomOutOff, footer, pageClass, children }: ViewerProps) {
  return (
    <Frame title="Report Viewer" icon={<PrinterIcon />} resizable enlarge className={className}>
      <div className="flex h-[27px] shrink-0 items-center border-b border-[#a3b8cc] bg-[#eeeeee]">
        <RvButton label="Save"><SaveIcon /></RvButton>
        <RvButton label="Print"><ReportPrintIcon /></RvButton>
        <RvButton label="Reload" off><ReloadIcon /></RvButton>
        <span className="w-[9px]" />
        <RvButton label="First page" off><NavIcon dir="left" bar /></RvButton>
        <RvButton label="Previous page" off><NavIcon dir="left" /></RvButton>
        <RvButton label="Next page" off={single}><NavIcon dir="right" /></RvButton>
        <RvButton label="Last page" off={single}><NavIcon dir="right" bar /></RvButton>
        <input
          type="text"
          aria-label="Page number"
          defaultValue="1"
          disabled={single}
          className={clsx(
            "h-[22px] w-[38px] border bg-white px-0.5 font-['Noto_Sans',sans-serif] text-xs",
            single ? "border-[#cddbe8] text-[#b8cfe5]" : "border-[#a3b8cc] text-[#333]"
          )}
        />
        <span className="w-2.5" />
        <RvButton label="Actual size"><PageIcon /></RvButton>
        <RvButton label="Fit page" on><FitPageIcon /></RvButton>
        <RvButton label="Fit width"><FitWidthIcon /></RvButton>
        <span className="w-[9px]" />
        <RvButton label="Zoom in"><ZoomIcon plus /></RvButton>
        <RvButton label="Zoom out" off={zoomOutOff}><ZoomIcon /></RvButton>
        <span className="flex h-[22px] w-[77px] border border-[#7a8a99] bg-white">
          <select
            id={`${id}-zoom`}
            aria-label="Zoom"
            defaultValue={zoom}
            className="min-w-0 flex-1 appearance-none px-px font-['Noto_Sans',sans-serif] text-xs font-bold text-[#333]"
          >
            <option>{zoom}</option>
          </select>
          <span className={clsx("pointer-events-none flex w-[18px] items-center justify-center border-l border-[#7a8a99]", metal)}>
            <Arrow d={down} />
          </span>
        </span>
      </div>
      <div className="flex min-h-0 flex-1">
        <div className={clsx("flex min-w-0 flex-1 pr-[11px] pl-1.5", pageClass)}>
          <div className="min-w-0 flex-1 border border-black bg-white shadow-[5px_5px_0_#808080]">{children}</div>
        </div>
        <div className="flex w-[15px] flex-col border-x border-[#a3b8cc] bg-[#eeeeee]">
          <span className="flex h-[15px] items-center justify-center border-b border-[#a3b8cc]">
            <Arrow d={up} />
          </span>
          <span className="flex-1" />
          <span className="flex h-[15px] items-center justify-center border-t border-[#a3b8cc]">
            <Arrow d={down} />
          </span>
        </div>
      </div>
      <div className="flex h-[15px] shrink-0 border-y border-[#a3b8cc] bg-[#eeeeee] pr-[15px]">
        <span className="flex w-[15px] items-center justify-center border-r border-[#7a8a99]">
          <Arrow d={left} />
        </span>
        <span className="flex-1" />
        <span className="flex w-[15px] items-center justify-center border-x border-[#a3b8cc]">
          <Arrow d={right} />
        </span>
      </div>
      <p className="shrink-0 text-center font-['DejaVu_Sans',sans-serif] text-[9px] leading-3 font-bold text-[#333]">{footer}</p>
    </Frame>
  )
}

function OrdersReport() {
  return (
    <div className="flex h-full flex-col px-[23px] font-['Noto_Sans',sans-serif] text-black">
      <div className="flex h-[50px] items-end justify-between">
        <span className="pb-[9px] text-xs leading-4">My Company</span>
        <span className="pb-1 text-[23px] leading-[30px]">Process Orders</span>
      </div>
      <table className="h-[361px] w-full table-fixed border-collapse text-left text-[8px] leading-[10px] whitespace-nowrap">
        <thead>
          <tr className="h-3 border-y border-[#7a6200] bg-[#ffcc00] *:p-0 *:font-normal">
            <th className="w-[74px]">Process Order</th>
            <th className="w-[71px]">Material</th>
            <th className="w-[124px]">Description</th>
            <th className="w-[61px]">Location ID</th>
            <th className="w-[95px]">Recipe ID</th>
            <th>Due Date</th>
          </tr>
        </thead>
        <tbody>
          {orders.map((order) => (
            <tr key={order.id} className="*:overflow-hidden *:p-0">
              <td>{order.id}</td>
              <td>{order.material}</td>
              <td>{order.description}</td>
              <td>WISBECH</td>
              <td>{order.recipe.slice(0, 17)}</td>
              <td>{order.due.slice(8, 10)}-Jul-18</td>
            </tr>
          ))}
        </tbody>
      </table>
      <p className="mt-1 pl-px text-[8px] leading-[14px]">17/02/19 19:20</p>
    </div>
  )
}

function LabelReport() {
  return (
    <div className="px-[15px] pt-5 font-['DejaVu_Serif',serif] text-[15px] leading-5 font-bold text-black">
      <div className="grid grid-cols-[134px_119px_auto] whitespace-nowrap">
        <span>43322887</span>
        <span>Line</span>
        <span>
          Plant <span className="font-['DejaVu_Sans',sans-serif]">0933</span>
        </span>
      </div>
      <p className="mt-[17px]">FELIX Tuna MB GiJ Pouch In Can</p>
      <div className="ml-[15px] w-[296px]">
        <p className="mt-5 text-center font-['Liberation_Sans',Arial,sans-serif] font-normal">23066443</p>
        <svg viewBox="0 0 79 249" preserveAspectRatio="none" className="block h-[249px] w-full" role="img" aria-label="Barcode 23066443">
          {bars.map(([x, w]) => (
            <rect key={x} x={x} y="0" width={w} height="249" />
          ))}
        </svg>
      </div>
    </div>
  )
}

/* ---------- dialogs ---------- */

function LabelPrintWindow() {
  return (
    <Frame title="Process Order Label Print [23066443]" icon={<ComputerIcon />} className="top-[149px] left-[788px] h-[173px] w-[620px]">
      <form className="grid auto-rows-[31px] grid-cols-[131px_451px] items-center gap-x-4 pt-[3px]">
        <Label id="p-order">Process Order</Label>
        <Field id="p-order" value="23066443" width="w-[140px]" flat gray />
        <Label id="p-preview">Preview</Label>
        <div className="flex items-center gap-[5px] pl-1">
          <Tick id="p-preview" checked />
          <span className="ml-[135px]">
            <Label id="p-count">Number of Labels</Label>
          </span>
          <Spinner id="p-count" value="1" width="w-[63px]" right />
        </div>
        <Label id="p-queue">Print Queue</Label>
        <Combo id="p-queue" value="EPSON ET-7700 Series" width="w-[451px]" tall />
      </form>
      <div className="mt-2.5 ml-[172px] flex gap-[3px]">
        <PushButton icon={<PrinterIcon />} className="h-[30px] w-[106px]">
          <u>P</u>rint
        </PushButton>
        <PushButton icon={<HelpIcon />} className="h-[30px] w-[105px]">
          <u>H</u>elp
        </PushButton>
        <PushButton icon={<DoorIcon />} className="h-[30px] w-[105px]">
          <u>C</u>lose
        </PushButton>
      </div>
    </Frame>
  )
}

function FormRow({ id, label, children }: { id: string; label: string; children: ReactNode }) {
  return (
    <>
      <Label id={id}>{label}</Label>
      <div className="flex">{children}</div>
    </>
  )
}

function OrderWindow() {
  return (
    <Frame title="Process Order [23066443]" icon={<MoleculeIcon />} active className="top-[381px] left-[501px] h-[507px] w-[468px]">
      <form className="flex flex-col pt-2">
        <div className="grid auto-rows-[29px] grid-cols-[148px_1fr] items-center gap-x-[7px]">
          <FormRow id="o-order" label="Process Order">
            <Field id="o-order" value="23066443" width="w-[120px]" flat gray />
          </FormRow>
          <FormRow id="o-desc" label="Description">
            <Field id="o-desc" value="FELIX Tuna MB GiJ Pouch In Can" width="w-[286px]" black />
          </FormRow>
          <FormRow id="o-material" label="Material">
            <Field id="o-material" value="43322887" width="w-[119px]" />
            <Lookup label="material" />
          </FormRow>
          <FormRow id="o-mdesc" label="Description">
            <Field id="o-mdesc" value="FELIX Tuna MB GiJ Pouch In Can" width="w-[287px]" flat />
          </FormRow>
          <FormRow id="o-recipe" label="Recipe">
            <Field id="o-recipe" value="100000000036003763" width="w-[119px]" />
          </FormRow>
          <FormRow id="o-qty" label="Quantity">
            <Field id="o-qty" value="27.000" width="w-[86px]" right />
          </FormRow>
          <FormRow id="o-uom" label="UOM">
            <Combo id="o-uom" value="PUM - planning unit measure" width="w-[287px]" tall />
          </FormRow>
          <FormRow id="o-due" label="Due Date">
            <Spinner id="o-due" value="18/07/2018 00:50:59" width="w-[122px]" />
          </FormRow>
          <FormRow id="o-location" label="Location ID">
            <Field id="o-location" value="WISBECH" width="w-[119px]" />
            <Lookup label="location" />
          </FormRow>
          <FormRow id="o-status" label="Status">
            <Combo id="o-status" value="Ready" width="w-[143px]" />
          </FormRow>
        </div>
        <div className="mt-0.5 grid auto-rows-[31px] grid-cols-[148px_1fr] items-center gap-x-[7px]">
          <FormRow id="o-pallet" label="Default Pallet Status">
            <Combo id="o-pallet" value="Unrestricted" width="w-[143px]" />
          </FormRow>
          <FormRow id="o-resource" label="Required Resource">
            <Field id="o-resource" value="DP4PREP" width="w-[119px]" />
            <Lookup label="required resource" />
          </FormRow>
          <FormRow id="o-customer" label="Customer ID">
            <Field id="o-customer" value="SELF" width="w-[119px]" />
            <Lookup label="customer" />
          </FormRow>
          <FormRow id="o-inspection" label="Inspection ID">
            <Field id="o-inspection" value="PANINC" width="w-[119px]" />
          </FormRow>
        </div>
      </form>
      <div className="mt-1.5 ml-[58px] flex gap-[7px]">
        <PushButton icon={<StopIcon />} disabled className="h-[31px] w-[107px]">
          Save
        </PushButton>
        <PushButton icon={<HelpIcon />} className="h-[31px] w-[107px]">
          Help
        </PushButton>
        <PushButton icon={<DoorIcon />} className="h-[31px] w-[107px]">
          Close
        </PushButton>
      </div>
    </Frame>
  )
}

/* ---------- logo ---------- */

function Logo() {
  return (
    <div className="absolute bottom-[-10px] left-[30px] z-10 flex items-center gap-2 text-[#1468c4]">
      <p className="text-right font-['Liberation_Serif',serif] text-base leading-[19px] font-bold">
        <span className="block">indir</span>
        <span className="block pr-1">Bak</span>
      </p>
      <svg width="98" height="48" viewBox="0 0 98 48" className="mb-1" aria-hidden="true">
        <ellipse cx="16" cy="6" rx="4.800" ry="5" fill="#0a66c8" />
        <path d="M1 20c4-3 9-5 16-4l-6 21c0 3 3 1 5-2l2 1c-2 6-6 9-10 9s-7-2-6-6l5-17c1-3-3-2-5 0z" fill="#0a66c8" />
        <path d="M18 24C27 4 63 2 74 22 66 42 30 44 18 24z" fill="#0a66c8" />
        <circle cx="45" cy="23" r="13" fill="#fff" />
        <circle cx="45" cy="23" r="10.500" fill="#d8ec1e" />
        <circle cx="45" cy="23" r="5" fill="#000" />
        <path d="M65 5C85 1 98 16 94 27c-1 4-4 8-8 10l6 6-19-3 4-20 3 8C85 22 82 11 65 5z" fill="#0a66c8" />
      </svg>
    </div>
  )
}

export default function App() {
  return (
    <div className="flex min-h-screen flex-col bg-white font-['Liberation_Sans',Arial,sans-serif]">
      <TitleBar />
      <MenuAndTools />
      <main className="relative flex-1">
        <MenuWindow />
        <OrdersWindow />
        <ReportViewer
          id="orders-report"
          className="top-[258px] left-4 h-[565px] w-[671px]"
          zoom="38.16%"
          zoomOutOff
          footer="Page 1 of 36"
          pageClass="pt-4 pb-5"
        >
          <OrdersReport />
        </ReportViewer>
        <LabelPrintWindow />
        <ReportViewer
          id="label-report"
          className="top-[397px] left-[984px] h-[509px] w-[446px]"
          zoom="95.68%"
          single
          footer="Page 1 of 1"
          pageClass="pt-2 pb-[13px]"
        >
          <LabelReport />
        </ReportViewer>
        <OrderWindow />
        <Logo />
      </main>
      <StatusBar />
    </div>
  )
}
